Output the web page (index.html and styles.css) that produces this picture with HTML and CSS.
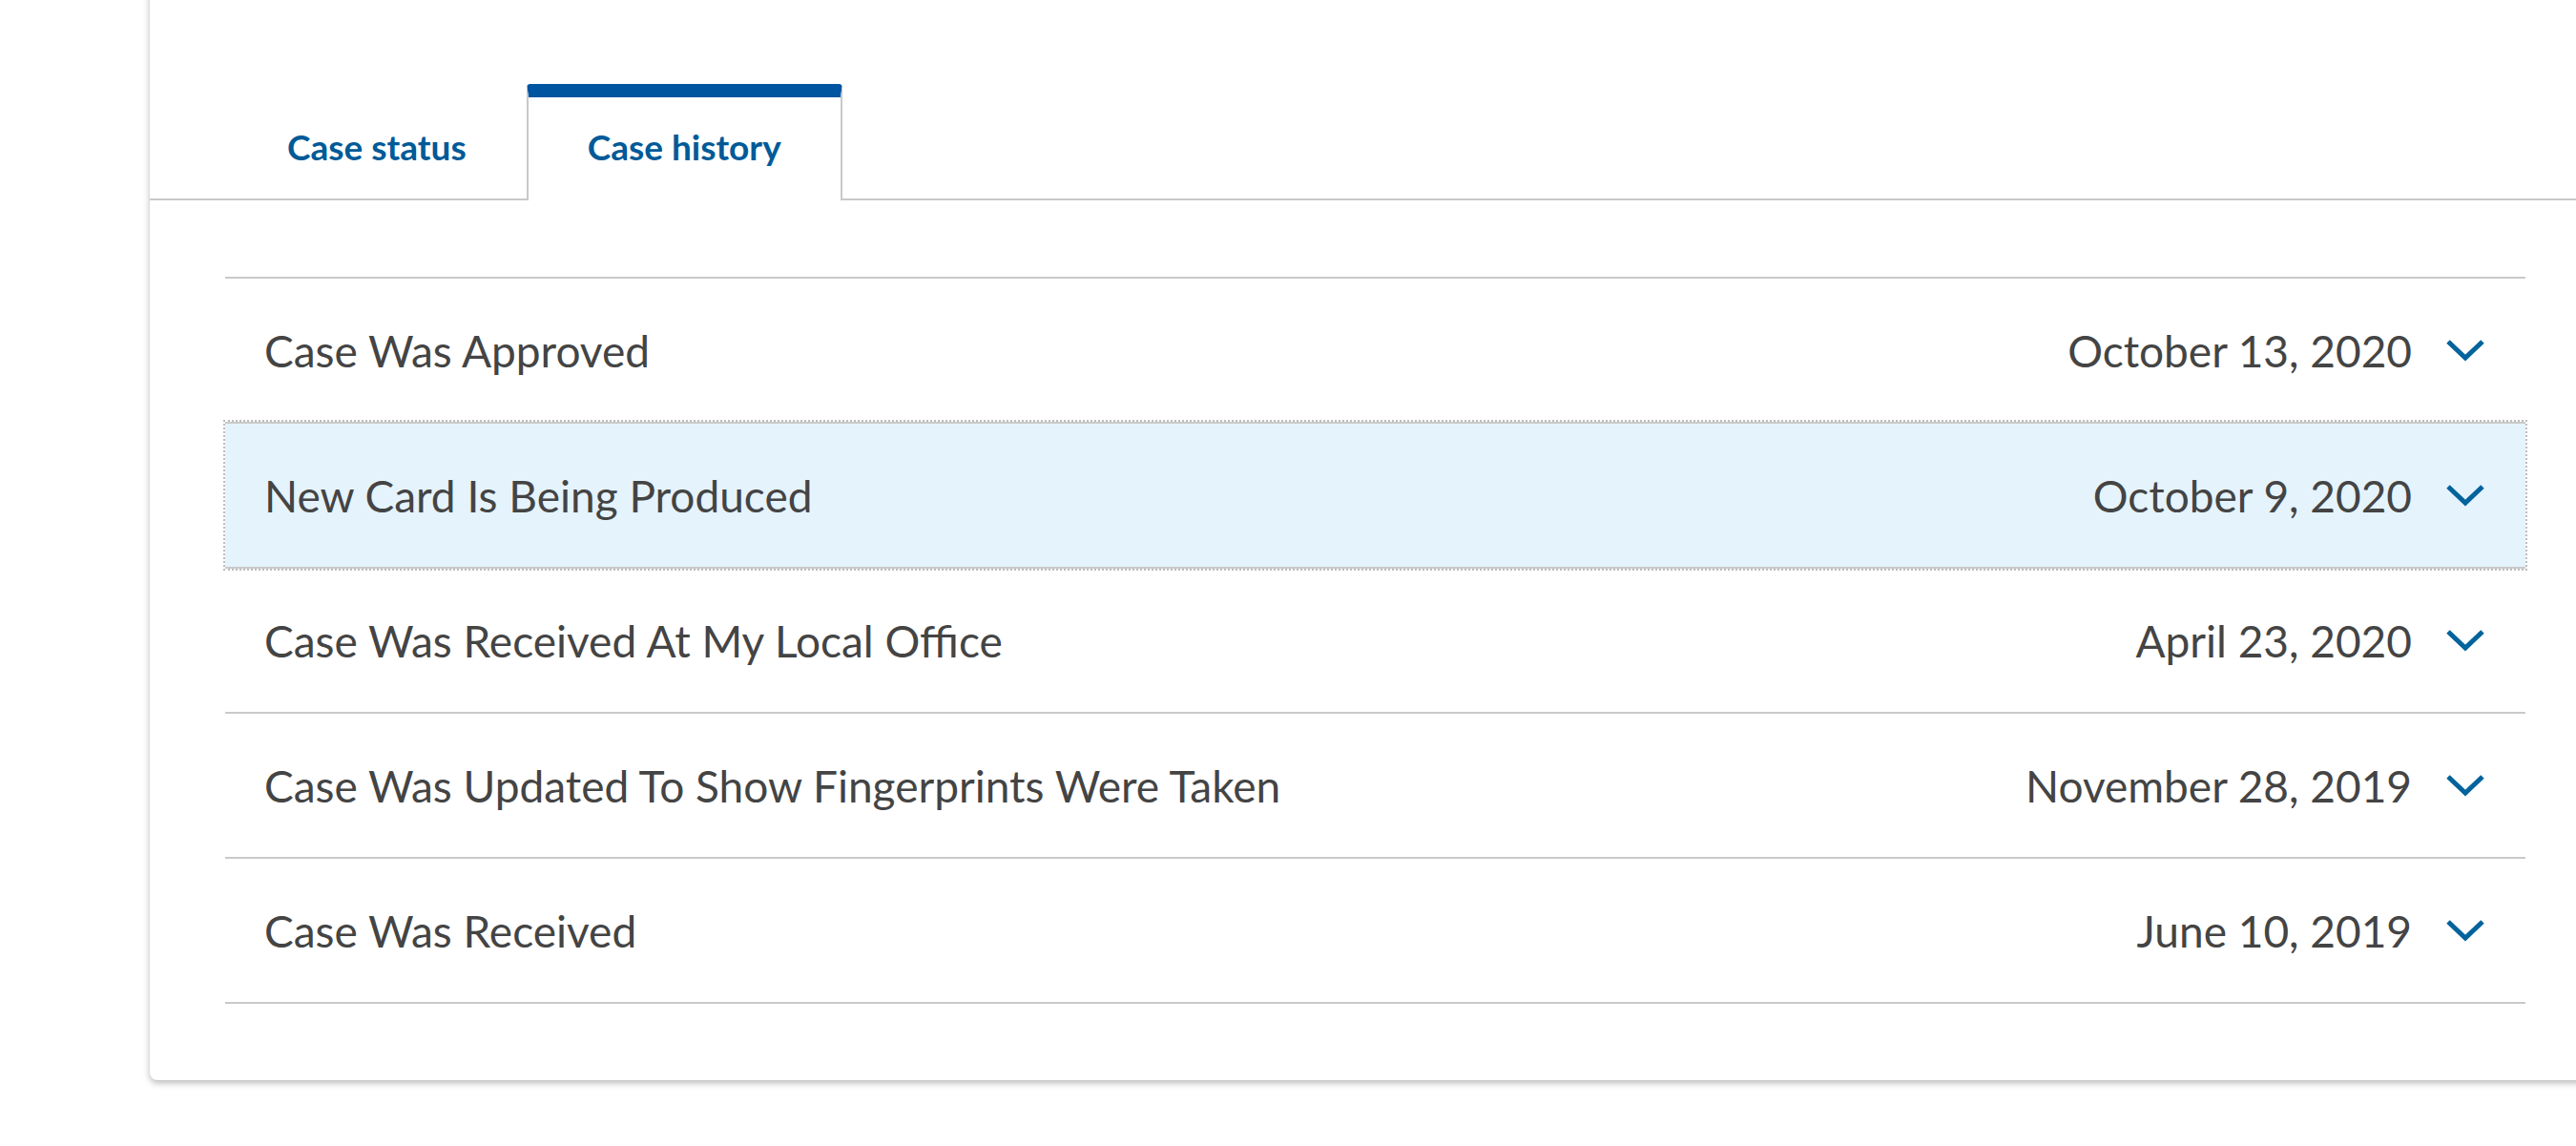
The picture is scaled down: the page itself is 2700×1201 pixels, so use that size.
FILE: index.html
```html
<!DOCTYPE html>
<html lang="en">
<head>
<meta charset="utf-8">
<title>Case history</title>
<link rel="stylesheet" href="styles.css">
</head>
<body>
<main class="page">
  <section class="card">
    <div class="tabs" role="tablist">
      <button class="tab" role="tab">Case status</button>
      <button class="tab tab--active" role="tab" aria-selected="true">Case history</button>
    </div>
    <ul class="history">
      <li class="item">
        <span class="item__title">Case Was Approved</span>
        <span class="item__date">October 13, 2020</span>
        <svg class="chev" viewBox="0 0 42 24" aria-hidden="true"><polyline points="3,3 21,20 39,3"/></svg>
      </li>
      <li class="item item--focus">
        <span class="item__title">New Card Is Being Produced</span>
        <span class="item__date">October 9, 2020</span>
        <svg class="chev" viewBox="0 0 42 24" aria-hidden="true"><polyline points="3,3 21,20 39,3"/></svg>
      </li>
      <li class="item">
        <span class="item__title">Case Was Received At My Local Office</span>
        <span class="item__date">April 23, 2020</span>
        <svg class="chev" viewBox="0 0 42 24" aria-hidden="true"><polyline points="3,3 21,20 39,3"/></svg>
      </li>
      <li class="item">
        <span class="item__title">Case Was Updated To Show Fingerprints Were Taken</span>
        <span class="item__date">November 28, 2019</span>
        <svg class="chev" viewBox="0 0 42 24" aria-hidden="true"><polyline points="3,3 21,20 39,3"/></svg>
      </li>
      <li class="item">
        <span class="item__title">Case Was Received</span>
        <span class="item__date">June 10, 2019</span>
        <svg class="chev" viewBox="0 0 42 24" aria-hidden="true"><polyline points="3,3 21,20 39,3"/></svg>
      </li>
    </ul>
  </section>
</main>
</body>
</html>
```
FILE: styles.css
```css
html, body {
  margin: 0;
  padding: 0;
  background: #ffffff;
  overflow: hidden;
}
body {
  width: 2700px;
  height: 1201px;
  font-family: "Lato", "Roboto", "Liberation Sans", sans-serif;
  color: #444444;
}
.page {
  padding-left: 157px;
}
.card {
  width: 2569px;
  margin-top: -20px;
  padding-top: 108px;
  padding-bottom: 80px;
  background: #ffffff;
  border-radius: 0 0 8px 8px;
  box-shadow: 0 3px 7px rgba(0, 0, 0, 0.28);
}
.tabs {
  display: flex;
  padding-left: 81px;
  border-bottom: 2px solid #c9c9c9;
}
.tab {
  margin: 0 0 -2px 0;
  padding: 33px 62px 38px;
  border: 2px solid transparent;
  border-top: 14px solid transparent;
  border-bottom: 0;
  background: transparent;
  font-family: inherit;
  font-size: 37px;
  font-weight: 700;
  line-height: 37px;
  color: #005a98;
  cursor: pointer;
}
.tab:first-child {
  padding-left: 61px;
  padding-right: 61px;
}
.tab--active {
  background: #ffffff;
  border-left-color: #c9c9c9;
  border-right-color: #c9c9c9;
  border-top-color: #0055a0;
  border-radius: 4px 4px 0 0;
}
.history {
  list-style: none;
  margin: 80px 79px 0;
  padding: 0;
  border-top: 2px solid #c9c9c9;
}
.item {
  position: relative;
  display: flex;
  align-items: center;
  height: 150px;
  padding: 0 42px 0 41px;
  border-bottom: 2px solid #c9c9c9;
  font-size: 46px;
}
.item__title {
  flex: 1;
}
.item__date {
  margin-right: 35px;
}
.chev {
  width: 42px;
  height: 24px;
  fill: none;
  stroke: #00639c;
  stroke-width: 5;
  stroke-linecap: butt;
}
.item--focus {
  background: #e5f3fd;
}
.item--focus::after {
  content: "";
  position: absolute;
  top: -4px;
  left: -2px;
  right: -2px;
  bottom: -4px;
  border: 2px dotted #bdbdbd;
  pointer-events: none;
}
```
